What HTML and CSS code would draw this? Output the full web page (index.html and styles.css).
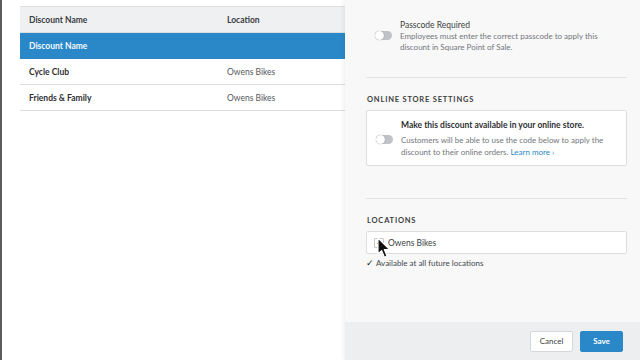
FILE: index.html
```html
<!DOCTYPE html>
<html lang="en">
<head>
  <meta charset="UTF-8" />
  <meta name="viewport" content="width=device-width, initial-scale=1.0" />
  <title>Discounts</title>
  <link rel="stylesheet" href="styles.css">
</head>
<body>
  <div class="page">
    <table class="discounts">
      <thead>
        <tr>
          <th class="col-name">Discount Name</th>
          <th>Location</th>
        </tr>
      </thead>
      <tbody>
        <tr class="selected">
          <td>Discount Name</td>
          <td></td>
        </tr>
        <tr>
          <td class="name">Cycle Club</td>
          <td class="loc">Owens Bikes</td>
        </tr>
        <tr>
          <td class="name">Friends &amp; Family</td>
          <td class="loc">Owens Bikes</td>
        </tr>
      </tbody>
    </table>
  </div>

  <aside class="panel">
    <div class="panel-body">
      <div class="setting passcode">
        <span class="toggle"></span>
        <div class="setting-text">
          <p class="setting-title">Passcode Required</p>
          <p class="setting-desc">Employees must enter the correct passcode to apply this discount in Square Point of Sale.</p>
        </div>
      </div>

      <section class="group online">
        <h4>Online Store Settings</h4>
        <div class="box setting">
          <span class="toggle"></span>
          <div class="setting-text">
            <p class="setting-title strong">Make this discount available in your online store.</p>
            <p class="setting-desc">Customers will be able to use the code below to apply the discount to their online orders. <a href="#">Learn more ›</a></p>
          </div>
        </div>
      </section>

      <section class="group">
        <h4>Locations</h4>
        <div class="box location">
          <span class="check">✓</span>
          <span>Owens Bikes</span>
          <svg class="cursor" width="14" height="22" viewBox="0 0 14 22">
            <path d="M1 1 L1 17 L4.6 13.6 L7.4 20.2 L10 19 L7.3 12.6 L12.4 12.4 Z" fill="#111" stroke="#fff" stroke-width="1.2" stroke-linejoin="round"/>
          </svg>
        </div>
        <label class="future"><span class="tick">✓</span>Available at all future locations</label>
      </section>
    </div>

    <footer class="panel-footer">
      <button class="btn">Cancel</button>
      <button class="btn primary">Save</button>
    </footer>
  </aside>
</body>
</html>
```

FILE: styles.css
```css
body {
  margin: 0;
  font-family: Lato, "Open Sans", Arial, sans-serif;
  background: #fff;
  color: #3d3f42;
  display: flex;
  height: 360px;
  overflow: hidden;
}
p {
  margin: 0;
}
.page {
  width: 345px;
  flex-shrink: 0;
  border-left: 2px solid #5c5c5c;
  padding: 6px 0 0 18px;
  box-sizing: border-box;
}
.discounts {
  width: 100%;
  border-collapse: collapse;
  font-size: 8.5px;
  border-top: 1px solid #dde0e3;
}
.discounts th,
.discounts td {
  text-align: left;
  padding: 0 9px;
  height: 25px;
  border-bottom: 1px solid #dcdfe2;
}
.discounts th {
  background: #eef0f2;
  font-weight: 700;
  color: #3a3c3f;
}
.discounts .col-name {
  width: 180px;
}
.selected td {
  background: #2a88c9;
  color: #f2f8fc;
  font-weight: 700;
  border-bottom-color: #2a88c9;
}
.name {
  font-weight: 700;
  color: #2e3033;
}
.loc {
  color: #55585c;
}
.panel {
  width: 295px;
  flex-shrink: 0;
  background: #f8f8f8;
  box-shadow: -2px 0 4px rgba(0, 0, 0, 0.06);
  display: flex;
  flex-direction: column;
  position: relative;
}
.panel-body {
  flex: 1;
  padding: 20px 13px 0 21px;
}
.setting {
  display: flex;
  align-items: center;
  gap: 8px;
}
.passcode {
  padding: 0 0 0 9px;
  height: 57px;
  align-items: flex-start;
  border-bottom: 1px solid #dfe1e4;
}
.passcode .toggle {
  margin-top: 11px;
}
.passcode .setting-desc {
  margin-top: 0;
  line-height: 11px;
}
.toggle {
  width: 17px;
  height: 9px;
  border-radius: 5px;
  background: #bfc3c8;
  position: relative;
  flex-shrink: 0;
}
.toggle::after {
  content: "";
  position: absolute;
  left: 0;
  top: 0;
  width: 9px;
  height: 9px;
  border-radius: 50%;
  background: #fff;
  box-shadow: 0 0 1px rgba(0, 0, 0, 0.45);
}
.setting-title {
  font-size: 8.5px;
  color: #3c3e41;
  line-height: 11px;
}
.setting-title.strong {
  font-weight: 700;
  color: #2f3134;
}
.setting-desc {
  font-size: 8px;
  line-height: 12px;
  color: #72767b;
  margin-top: 3px;
}
.setting-desc a {
  color: #2a88c9;
  text-decoration: none;
}
.group {
  padding-top: 17px;
}
.group.online {
  padding-bottom: 32px;
  border-bottom: 1px solid #dfe1e4;
}
.group h4 {
  margin: 0 0 6px 1px;
  font-size: 7.5px;
  letter-spacing: 0.8px;
  text-transform: uppercase;
  color: #3c3e41;
  font-weight: 700;
}
.box {
  background: #fff;
  border: 1px solid #dcdfe2;
  border-radius: 2px;
}
.group .box.setting {
  padding: 9px 10px 7px 9px;
}
.location {
  height: 21px;
  display: flex;
  align-items: center;
  gap: 4px;
  padding: 0 7px;
  font-size: 8.5px;
  color: #3c3e41;
  position: relative;
}
.check {
  width: 8px;
  height: 8px;
  border: 1px solid #c4c7cb;
  border-radius: 1px;
  font-size: 8px;
  line-height: 8px;
  text-align: center;
  color: #222;
  font-family: "DejaVu Sans", sans-serif;
}
.cursor {
  position: absolute;
  left: 10px;
  top: 5px;
}
.future {
  display: flex;
  align-items: center;
  gap: 1px;
  margin-top: 4px;
  font-size: 8px;
  color: #44474b;
}
.tick {
  font-size: 9px;
  color: #222;
  width: 9px;
  font-family: "DejaVu Sans", sans-serif;
}
.panel-footer {
  background: #eceef0;
  height: 38px;
  display: flex;
  justify-content: flex-end;
  align-items: center;
  gap: 7px;
  padding: 0 17px 0 0;
}
.btn {
  font-family: inherit;
  font-size: 8px;
  height: 21px;
  width: 43px;
  border-radius: 2px;
  border: 1px solid #d4d7db;
  background: #fff;
  color: #3c3e41;
  padding: 0;
}
.btn.primary {
  background: #2a88c9;
  border-color: #2a88c9;
  color: #fff;
  font-weight: 700;
}
```
